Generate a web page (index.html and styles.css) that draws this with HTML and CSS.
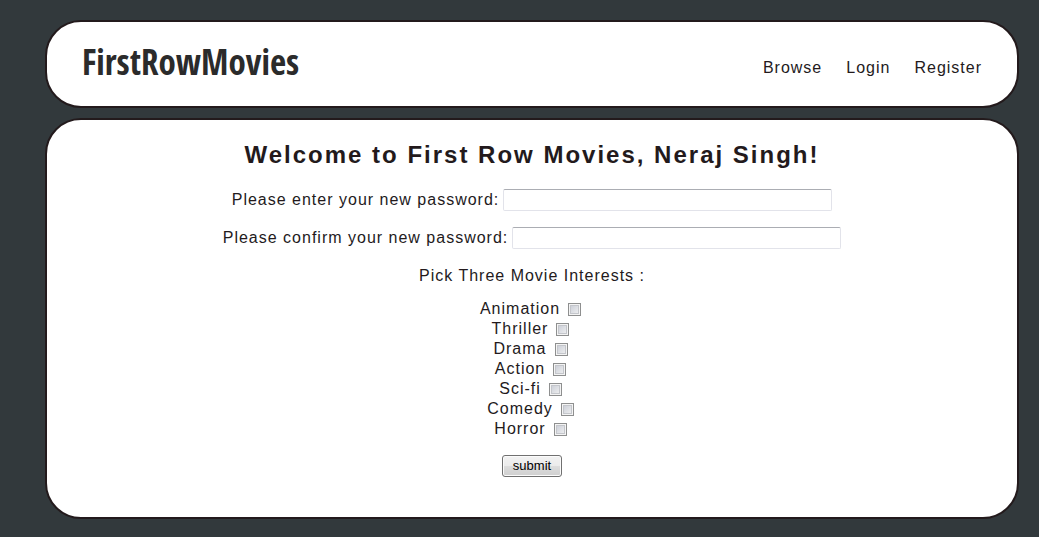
FILE: index.html
```html
<!DOCTYPE html>
<html lang="en">
<head>
<meta charset="utf-8">
<title>First Row Movies</title>
<link rel="stylesheet" href="styles.css">
</head>
<body>
<header class="panel site-header">
  <a class="logo" href="#">FirstRowMovies</a>
  <nav class="nav">
    <a href="#">Browse</a>
    <a href="#">Login</a>
    <a href="#">Register</a>
  </nav>
</header>
<main class="panel content">
  <h1 class="title">Welcome to First Row Movies, Neraj Singh!</h1>
  <form class="form">
    <div class="field">
      <label for="password">Please enter your new password:</label>
      <input class="text-box" id="password" type="password">
    </div>
    <div class="field">
      <label for="confirm">Please confirm your new password:</label>
      <input class="text-box" id="confirm" type="password">
    </div>
    <fieldset class="interests">
      <legend class="legend">Pick Three Movie Interests :</legend>
      <label class="option">Animation <input class="check" type="checkbox"></label>
      <label class="option">Thriller <input class="check" type="checkbox"></label>
      <label class="option">Drama <input class="check" type="checkbox"></label>
      <label class="option">Action <input class="check" type="checkbox"></label>
      <label class="option">Sci-fi <input class="check" type="checkbox"></label>
      <label class="option">Comedy <input class="check" type="checkbox"></label>
      <label class="option">Horror <input class="check" type="checkbox"></label>
    </fieldset>
    <button class="submit" type="submit">submit</button>
  </form>
</main>
</body>
</html>
```
FILE: styles.css
```css
* {
  box-sizing: border-box;
}

body {
  margin: 0;
  padding: 20px 20px 18px 45px;
  display: flex;
  flex-direction: column;
  gap: 10px;
  background: #32393c;
  color: #231a1c;
  font: 16px/20px "Liberation Sans", Arial, sans-serif;
  letter-spacing: 1px;
}

.panel {
  background: #fff;
  border: 2px solid #231a1c;
  border-radius: 36px;
}

.site-header {
  display: flex;
  align-items: center;
  justify-content: space-between;
  padding: 16px 35px 20px;
}

.logo {
  color: #2b2b2b;
  font: bold 35px/48px "Open Sans Condensed", "Liberation Sans Narrow", "DejaVu Sans Condensed", sans-serif;
  letter-spacing: normal;
  text-decoration: none;
}

.nav {
  display: flex;
  gap: 24px;
  padding-top: 12px;
}

.nav a {
  color: inherit;
  text-decoration: none;
}

.content {
  padding: 21px 20px 40px;
}

.title {
  margin: 0 0 20px;
  font-size: 24px;
  line-height: 28px;
  letter-spacing: 2px;
  text-align: center;
}

.form {
  display: flex;
  flex-direction: column;
  align-items: center;
  gap: 16px;
}

.field {
  display: flex;
  align-items: center;
  gap: 4px;
}

.text-box {
  width: 329px;
  height: 22px;
  padding: 1px 4px;
  background: #fff;
  border: 1px solid #e2e3ea;
  border-top-color: #abadb3;
  border-radius: 2px;
}

.interests {
  display: flex;
  flex-direction: column;
  align-items: center;
  margin: 0;
  padding: 0;
  border: 0;
}

.legend {
  margin: 0 auto;
  padding: 0 0 12px;
  line-height: 22px;
}

.option {
  display: flex;
  align-items: center;
  gap: 8px;
  padding-right: 3px;
}

.check {
  appearance: none;
  width: 13px;
  height: 13px;
  margin: 0;
  background: linear-gradient(135deg, #c5c9d3, #f4f4f4);
  border: 1px solid #8e8f8f;
  box-shadow: inset 0 0 0 1px #f4f4f4, inset 0 0 0 2px #c4c6cb;
}

.check:checked {
  background: #4a5f97;
}

.submit {
  height: 22px;
  padding: 0 10px;
  background: linear-gradient(#f2f2f2 0%, #ebebeb 50%, #dddddd 50%, #cfcfcf 100%);
  border: 1px solid #707070;
  border-radius: 3px;
  box-shadow: inset 0 0 0 1px #fbfbfb;
  color: #000;
  font: 13px/16px "Liberation Sans", Arial, sans-serif;
}
```
